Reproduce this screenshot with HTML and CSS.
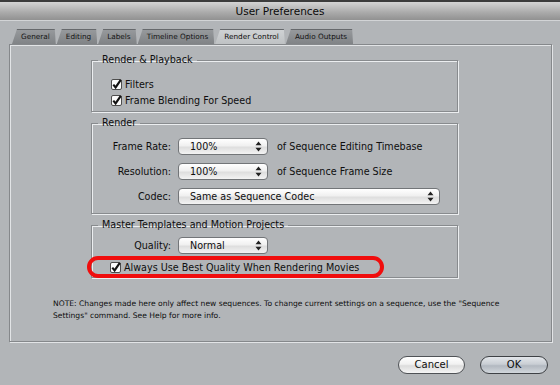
FILE: index.html
```html
<!DOCTYPE html>
<html lang="en">
<head>
    <meta charset="UTF-8">
    <title>User Preferences</title>
    <link rel="stylesheet" href="styles.css">
</head>
<body>
<div class="window">
    <div class="titleBar">User Preferences</div>

    <div class="tabRow">
        <div class="tab">General</div>
        <div class="tab">Editing</div>
        <div class="tab">Labels</div>
        <div class="tab">Timeline Options</div>
        <div class="tab tabActive">Render Control</div>
        <div class="tab">Audio Outputs</div>
    </div>

    <div class="panel">
        <fieldset class="group groupPlayback">
            <legend>Render &amp; Playback</legend>
            <div class="checkRow">
                <svg class="checkBox" width="11" height="11" viewBox="0 0 11 11"><rect x="0.5" y="0.5" width="10" height="10" rx="1.5" fill="#fbfbfb" stroke="#4d4d4d"/><path d="M2.3 5.6 L4.6 8.4 L9.8 0.8" fill="none" stroke="#111" stroke-width="2.1"/></svg>
                <span>Filters</span>
            </div>
            <div class="checkRow">
                <svg class="checkBox" width="11" height="11" viewBox="0 0 11 11"><rect x="0.5" y="0.5" width="10" height="10" rx="1.5" fill="#fbfbfb" stroke="#4d4d4d"/><path d="M2.3 5.6 L4.6 8.4 L9.8 0.8" fill="none" stroke="#111" stroke-width="2.1"/></svg>
                <span>Frame Blending For Speed</span>
            </div>
        </fieldset>

        <fieldset class="group groupRender">
            <legend>Render</legend>
            <div class="fieldRow">
                <div class="fieldLabel">Frame Rate:</div>
                <div class="popup popupShort">
                    <span>100%</span>
                    <svg width="7" height="11" viewBox="0 0 7 11"><path d="M3.5 0.5 L6.5 4.3 L0.5 4.3 Z M3.5 10.5 L6.5 6.7 L0.5 6.7 Z" fill="#222"/></svg>
                </div>
                <div class="fieldNote">of Sequence Editing Timebase</div>
            </div>
            <div class="fieldRow">
                <div class="fieldLabel">Resolution:</div>
                <div class="popup popupShort">
                    <span>100%</span>
                    <svg width="7" height="11" viewBox="0 0 7 11"><path d="M3.5 0.5 L6.5 4.3 L0.5 4.3 Z M3.5 10.5 L6.5 6.7 L0.5 6.7 Z" fill="#222"/></svg>
                </div>
                <div class="fieldNote">of Sequence Frame Size</div>
            </div>
            <div class="fieldRow">
                <div class="fieldLabel">Codec:</div>
                <div class="popup popupLong">
                    <span>Same as Sequence Codec</span>
                    <svg width="7" height="11" viewBox="0 0 7 11"><path d="M3.5 0.5 L6.5 4.3 L0.5 4.3 Z M3.5 10.5 L6.5 6.7 L0.5 6.7 Z" fill="#222"/></svg>
                </div>
            </div>
        </fieldset>

        <fieldset class="group groupMaster">
            <legend>Master Templates and Motion Projects</legend>
            <div class="fieldRow">
                <div class="fieldLabel">Quality:</div>
                <div class="popup popupShort">
                    <span>Normal</span>
                    <svg width="7" height="11" viewBox="0 0 7 11"><path d="M3.5 0.5 L6.5 4.3 L0.5 4.3 Z M3.5 10.5 L6.5 6.7 L0.5 6.7 Z" fill="#222"/></svg>
                </div>
            </div>
            <div class="checkRow markedRow">
                <svg class="checkBox" width="11" height="11" viewBox="0 0 11 11"><rect x="0.5" y="0.5" width="10" height="10" rx="1.5" fill="#fbfbfb" stroke="#4d4d4d"/><path d="M2.3 5.6 L4.6 8.4 L9.8 0.8" fill="none" stroke="#111" stroke-width="2.1"/></svg>
                <span>Always Use Best Quality When Rendering Movies</span>
            </div>
        </fieldset>

        <p class="note">NOTE: Changes made here only affect new sequences. To change current settings on a sequence, use the "Sequence Settings" command. See Help for more info.</p>
    </div>

    <div class="buttonRow">
        <div class="button">Cancel</div>
        <div class="button buttonDefault">OK</div>
    </div>
</div>
</body>
</html>
```

FILE: styles.css
```css
body{
    margin: 0;
    font-family: "DejaVu Sans", sans-serif;
    font-size: 9.6px;
    color: #0e0e0e;
    background: #b2b5b8;
}
.window{
    width: 560px;
    height: 385px;
    display: flex;
    flex-direction: column;
    background: #b2b5b8;
    overflow: hidden;
}
.titleBar{
    height: 18px;
    border-top: 2px solid #3c3c3c;
    border-bottom: 1px solid #d2d4d6;
    background: linear-gradient(#d4d4d4, #a9a9a9 60%, #919191);
    text-align: center;
    line-height: 18px;
    font-size: 10.5px;
    color: #0a0a0a;
}
.tabRow{
    display: flex;
    height: 15px;
    margin-top: 8px;
    padding-left: 12px;
}
.tab{
    height: 15px;
    box-sizing: border-box;
    padding: 0 6px 0 9px;
    margin-right: 1px;
    background: linear-gradient(#96999c, #808386);
    clip-path: polygon(5px 0, calc(100% - 1px) 0, 100% 100%, 0 100%);
    border-top: 1px solid #66696c;
    font-size: 7.3px;
    line-height: 14px;
    color: #141414;
}
.tabActive{
    background: linear-gradient(#cfd2d4, #bfc2c4);
    color: #0e0e0e;
}
.panel{
    height: 298px;
    margin: 0 8px 0 9px;
    box-sizing: border-box;
    border: 1px solid #85888b;
    box-shadow: inset 1px 1px 0 #e2e4e6, 1px 1px 0 #e2e4e6;
    display: flex;
    flex-direction: column;
}
.group{
    width: 367px;
    box-sizing: border-box;
    margin: 0 0 0 81px;
    padding: 0;
    border: 1px solid #888b8e;
    box-shadow: inset 1px 1px 0 #eceef0, 1px 1px 0 #eceef0;
    min-width: 0;
}
.group legend{
    margin-left: 6px;
    padding: 0 4px;
    line-height: 12px;
    height: 12px;
}
.groupPlayback{
    margin-top: 9px;
    padding: 10px 0 3px 0;
}
.groupRender{
    margin-top: 5px;
    padding: 9px 0 8px 0;
    display: flex;
    flex-direction: column;
    gap: 8px;
}
.groupMaster{
    margin-top: 5px;
    padding: 6px 0 0 0;
}
.checkRow{
    display: flex;
    align-items: center;
    gap: 3px;
    height: 16px;
    padding-left: 19px;
}
.markedRow{
    width: 297px;
    height: 22px;
    box-sizing: border-box;
    margin: 2px 0 -1px -5px;
    padding-left: 19px;
    border: 4px solid #f00d0d;
    border-radius: 12px;
}
.fieldRow{
    display: flex;
    align-items: center;
    height: 17px;
}
.fieldLabel{
    width: 79px;
    text-align: right;
    margin-right: 7px;
}
.fieldNote{
    margin-left: 9px;
}
.popup{
    height: 17px;
    box-sizing: border-box;
    border: 1px solid #727578;
    border-radius: 4px;
    background: linear-gradient(#ffffff, #f0f0f0 45%, #dedede 55%, #f3f3f3);
    display: flex;
    align-items: center;
    justify-content: space-between;
    padding: 0 5px 0 11px;
}
.popupShort{
    width: 90px;
}
.popupLong{
    width: 262px;
}
.note{
    margin: 20px 0 0 43px;
    width: 456px;
    font-size: 7.6px;
    line-height: 12px;
}
.buttonRow{
    display: flex;
    justify-content: flex-end;
    gap: 15px;
    margin: 14px 12px 0 0;
}
.button{
    width: 67px;
    height: 18px;
    box-sizing: border-box;
    border: 1px solid #4f5256;
    border-radius: 9px;
    background: linear-gradient(#ffffff, #f1f1f1 45%, #dcdcdc 55%, #f5f5f5);
    text-align: center;
    line-height: 16px;
    font-size: 10px;
}
.buttonDefault{
    width: 68px;
    border-color: #3e4145;
    background: linear-gradient(#e3e6ea, #c9ced4 45%, #b2b8c0 55%, #d2d7dc);
}
```
